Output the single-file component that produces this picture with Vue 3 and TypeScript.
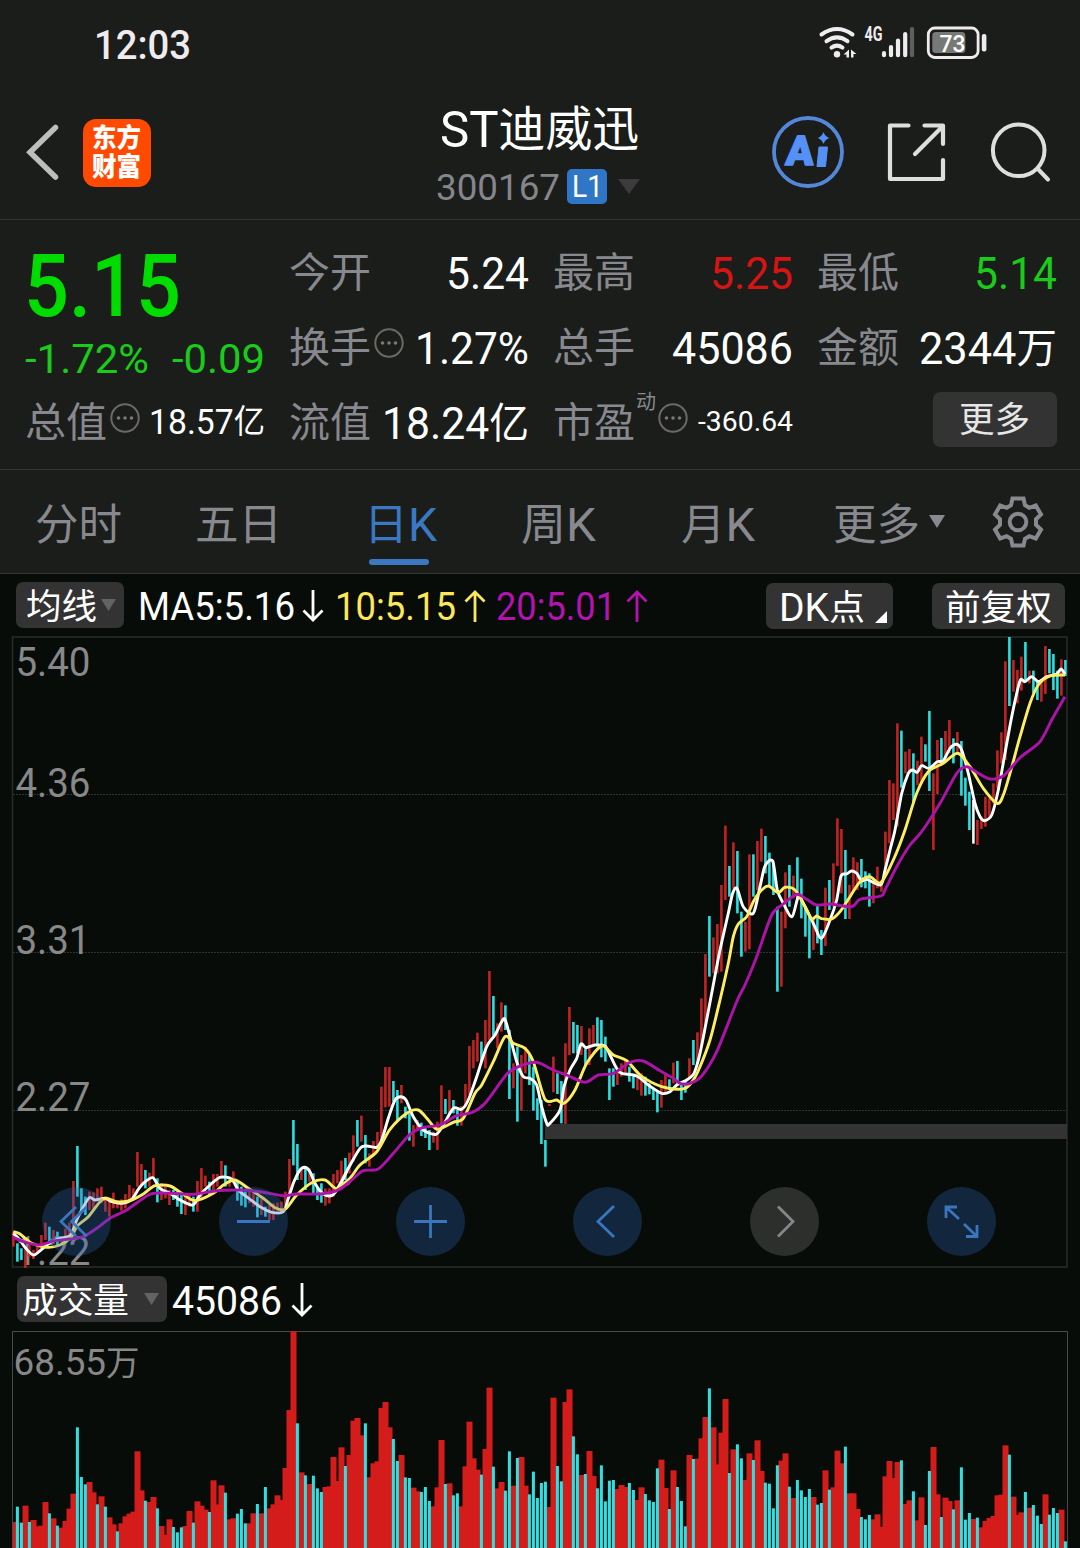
<script setup lang="ts">
import { h } from 'vue'

interface FitProps {
  t: string
  w: number
  s: number
  cjk?: number
  weight?: number
  color?: string
}

const CJK = /([\u4e00-\u9fff]+)/

/** One line of text fitted to a fixed width; its box is as tall as a capital letter. */
const Fit = (p: FitProps) => {
  const cap = p.s * 0.711
  const runs = p.t.split(CJK).filter((r) => r.length > 0)
  return h(
    'svg',
    { width: p.w, height: cap, overflow: 'visible', style: 'display:block;flex:none' },
    h(
      'text',
      {
        x: 0,
        y: cap,
        'font-size': p.s,
        'font-weight': p.weight ?? 400,
        fill: p.color ?? '#ffffff',
        'font-family': 'Roboto, "Noto Sans CJK SC", sans-serif',
        textLength: p.w,
        lengthAdjust: 'spacingAndGlyphs',
      },
      runs.map((r, i) =>
        CJK.test(r)
          ? h('tspan', { 'font-size': p.cjk ?? p.s * 0.92, dy: -1 }, r)
          : h('tspan', { dy: i > 0 ? 1 : 0 }, r),
      ),
    ),
  )
}
Fit.props = ['t', 'w', 's', 'cjk', 'weight', 'color']

const grey = '#88888f'
const green = '#1bcb1b'

/* Volume bars: R = rising, C = falling, followed by the top offset in thirds of a pixel. */
const volumeRaw = `R606 C560 C608 R557 C606 R600 R619 R617 R546 C580 R595 C617 R623 R603 R566 R521 C322 C471 C493 R486
R517 C553 R529 C560 R592 R613 C634 R610 R589 R581 R575 R394 R511 C542 R546 R531 C565 R618 R644 R598
C621 C637 C622 R618 R573 C608 R544 R557 R569 C576 R481 R553 R496 C518 R598 R595 C581 C567 C610 R610
R580 C552 R580 C501 R565 R553 R526 R540 R444 R270 R34 C310 R457 C466 R492 C467 C505 C516 R501 R499
R411 R483 R382 C438 R405 R302 R294 R346 C310 R472 R430 R424 R264 R246 R322 C357 C423 R405 C472 C474
R503 R514 C516 C501 C543 R559 R502 R360 C492 R490 C526 C520 R559 R439 R305 R415 R449 C464 R387 R203
C440 R505 R486 C512 C394 R497 C414 R411 R497 C523 C455 C534 C489 C485 R561 R233 C438 C484 R246 R208
C349 C403 R465 C462 R393 R468 C505 C436 C544 C482 C480 R507 R495 R501 C489 C510 R540 R502 C522 C541
C546 C445 R419 R504 C567 R451 C501 C543 C619 R405 C417 R416 R355 R291 C205 R322 R433 R338 R237 C459
R388 C373 C415 R480 R400 C420 R361 R453 C488 C491 C565 C436 R422 R400 C500 R534 C480 C511 C531 C507
R531 C554 C549 R451 C509 R502 R392 R430 C380 R520 R520 R567 C591 C598 C585 R598 R583 R620 R469 R423
R474 R426 C421 R552 R541 C514 R601 R532 C615 C453 R381 R523 C591 R533 R543 C568 R541 C442 C599 C579
R597 C593 R622 R603 R594 R588 R526 R524 R376 C404 R530 R584 R577 C516 R563 C555 C587 C612 R523 C584
C564 C579 R569 C664`

const centre = (i: number) => 13.4 + 4 * i

const volumes = volumeRaw.split(/\s+/).map((v, i) => ({
  up: v[0] === 'R',
  x: centre(i),
  y: 1320 + Number(v.slice(1)) / 3,
}))
const sortedVolumes = [...volumes.filter((v) => v.up), ...volumes.filter((v) => !v.up)]

/* Price ranges, grouped by the base line their offsets (thirds of a pixel) are counted from. */
const priceBlocks: { first: number; base: number; raw: string }[] = [
  {
    first: 0,
    base: 1040,
    raw: `575,620 610,665 625,660 628,684 615,650 630,657 612,642 585,625 548,600 560,605 570,612 575,615 590,612 566,606 548,603 423,560 318,470 445,510 470,525 455,510
457,510 445,480 440,490 470,515 480,530 458,505 480,505 478,512 462,505 435,480 445,475 336,440 372,435 390,445 398,440 354,412 415,487 430,480 440,475 450,495
450,480 455,500 465,522 470,525 465,500 470,515 423,515 384,475 407,440 425,465 402,450 402,440 363,410 376,440 410,440 394,430 420,482 440,497 455,502 450,490
460,500 470,532 475,525 500,530 495,540 490,540 488,518 485,515 455,495 357,470 240,376 312,420 385,420 378,450 385,425 400,465 440,480 430,488 445,497 445,490
402,470 390,430 362,420 354,420 338,400 286,365`,
  },
  {
    first: 86,
    base: 940,
    raw: `540,620 527,605 585,670 640,680 603,645 576,620 440,610 381,502 381,500 423,485 450,545 435,490 500,535 520,602 555,620 540,570 548,588 560,594 570,630 575,608
545,630 436,560 477,522 450,525 480,520 510,557 498,557 432,500 318,465 300,385 278,365 305,365 240,385 93,300 168,290 250,325 187,275 196,270 270,477 370,445
320,545 345,512 320,400 345,435 380,512 475,540 480,612 600,680 492,498 350,457 400,462 423,550 310,552 201,345 246,340 255,340 258,345 325,375 265,375 255,315
232,320 240,352 290,365 385,480 385,440 390,435 370,410 360,400 380,425 405,445 410,450 400,467 410,467 430,463 445,480 450,517 420,503 405,460 418,450 368,430
363,430`,
  },
  {
    first: 167,
    base: 800,
    raw: `850,900 840,878 775,835 720,795 697,790 595,740 462,670 348,530 412,520 372,520 255,515 77,300 198,290 127,265 153,340 335,470 365,455 163,448 163,290 123,270
86,185 108,220 158,260 195,285 320,575 335,560 217,385 195,320 227,295 172,300 236,355 320,410 350,475 350,450 315,430 390,465 263,438 240,330 190,320 55,198
87,280 150,357 255,357 172,275 187,270 177,262 214,265 220,320 240,310 200,265 240,275`,
  },
  {
    first: 218,
    base: 630,
    raw: `605,730 450,640 460,570 280,590 302,473 365,430 357,430 370,518 392,465 320,460 343,395 243,483 430,660 330,492 324,400 303,385 270,370 325,400 306,370 333,497
443,527 485,600 510,641 570,645 560,597 500,590 505,560 460,520 361,475 307,400 94,390 21,228 90,185 120,220 80,182 36,155 122,160 122,190 150,210 150,215
48,192 57,130 72,180 122,206 88,197 90,138`,
  },
]

const kindOverride: Record<number, string> = {
  2: 'C', 4: 'R', 21: 'R', 23: 'R', 26: 'R', 57: 'C', 58: 'C', 63: 'C', 70: 'C', 86: 'C', 240: 'W', 241: 'R', 257: 'R',
}

const candles = priceBlocks.flatMap((b) =>
  b.raw.split(/\s+/).map((pair, k) => {
    const i = b.first + k
    const [hi, lo] = pair.split(',').map(Number)
    const kind = kindOverride[i] ?? (volumes[i].up ? 'R' : 'C')
    return { i, kind, x: centre(i), y1: b.base + hi / 3, y2: b.base + lo / 3 }
  }),
)
const candleColor: Record<string, string> = { R: '#c22222', C: '#2adfe2', W: '#f4f4f4' }

type Segment = [number, number, string]

/* Joins segments into one smooth path; each segment has an origin and offsets in thirds. */
function smooth(segments: Segment[]): string {
  const pts = segments.flatMap(([ox, oy, raw]) =>
    raw.split(' ').map((p) => {
      const [x, y] = p.split(',').map(Number)
      return [ox + x / 3, oy + y / 3]
    }),
  )
  let d = `M${pts[0][0].toFixed(1)} ${pts[0][1].toFixed(1)}`
  for (let i = 0; i < pts.length - 1; i++) {
    const p0 = pts[Math.max(0, i - 1)]
    const p1 = pts[i]
    const p2 = pts[i + 1]
    const p3 = pts[Math.min(pts.length - 1, i + 2)]
    const c = [
      p1[0] + (p2[0] - p0[0]) / 7, p1[1] + (p2[1] - p0[1]) / 7,
      p2[0] - (p3[0] - p1[0]) / 7, p2[1] - (p3[1] - p1[1]) / 7,
      p2[0], p2[1],
    ]
    d += ` C${c.map((n) => n.toFixed(1)).join(' ')}`
  }
  return d
}

const ma5 = smooth([
  [0, 1040, '40,580 58,598 75,622 100,645 125,628 150,608 180,595 205,590 215,580 228,545 245,510 268,473 285,480 315,475 335,485 365,490 395,478 415,448 430,430 458,413 480,445 510,460 540,480 578,495 600,465 630,435 660,412 695,417 715,450 750,478 780,500 815,517 850,515 865,475 880,430 898,393 913,382 928,392 945,430 965,458 988,468 1005,458 1040,395'],
  [340, 940, '0,735 25,685 60,625 80,618 110,622 125,600 145,535 165,480 182,470 198,480 220,530 250,570 288,583 310,555 340,505 365,508 385,480 410,410 440,320 465,285 485,245 495,238 510,290 530,365 550,410 570,415 590,435 605,500 620,550 628,552 660,510 672,440 690,390 710,355 723,312 738,323 765,315 795,318 810,345 830,385 845,400 890,408 925,435 965,460 990,455 1010,435'],
  [680, 800, '20,840 42,820 60,760 78,670 95,580 120,450 145,340 158,280 171,265 190,320 220,340 240,260 255,198 278,183 292,270 310,310 336,350 355,290 370,310 400,370 424,415 450,360 470,300 483,228 500,222 515,213 530,220 545,243'],
  [860, 630, '20,748 62,765 75,720 90,660 105,600 125,490 145,430 158,420 172,427 185,407 207,415 232,395 250,392 270,355 290,343 305,360 325,430 345,520 360,560 373,572 395,555 415,480 435,370 455,260 475,170 483,148 495,155 515,140 535,155 560,140 590,132 603,117 615,133'],
])
const ma10 = smooth([
  [0, 1040, '40,575 60,582 95,610 140,622 180,615 215,590 230,560 265,530 300,485 320,475 350,485 390,482 430,462 465,437 510,438 545,460 585,482 640,460 670,435 705,420 745,445 790,475 825,503 855,508 890,465 935,428 975,420 1008,445 1045,430'],
  [340, 940, '0,740 30,715 60,675 110,635 150,568 200,520 235,510 265,540 292,568 340,547 370,535 405,460 425,435 460,365 495,290 520,310 555,325 580,365 615,478 650,480 672,490 705,450 740,370 785,318 820,345 860,362 900,405 945,432 985,445'],
  [680, 800, '15,865 40,840 60,800 90,720 120,600 145,490 160,410 175,372 200,350 220,305 240,275 265,258 295,278 315,262 345,270 375,320 395,357 410,348 425,356 455,357 480,335 510,290 540,245'],
  [860, 630, '30,740 62,758 100,690 135,600 170,490 205,425 250,400 293,370 330,410 370,475 412,520 430,495 450,430 480,320 510,220 535,165 570,138 615,135'],
])
const ma20 = smooth([
  [0, 1040, '40,592 70,605 115,615 160,603 210,597 250,590 290,565 330,535 380,510 450,463 510,460 580,463 650,452 720,450 780,455 850,467 890,462 960,462 1010,452 1050,425'],
  [340, 940, '0,748 35,720 70,692 115,687 160,640 210,583 250,562 300,555 350,527 395,518 435,490 500,403 540,378 590,367 640,390 680,405 735,427 775,405 820,400 870,367 910,363 960,392 1000,415'],
  [680, 800, '0,850 30,850 65,828 110,755 170,605 195,555 230,470 275,345 310,312 350,283 380,298 410,315 450,312 515,320 540,298 603,288'],
  [860, 630, '75,780 110,710 150,645 185,605 240,520 290,430 320,410 355,430 390,447 430,438 480,383 540,335 575,270 615,200'],
])

const axis = [
  { t: '5.40', y: 676 },
  { t: '4.36', y: 796.5 },
  { t: '3.31', y: 954 },
  { t: '2.27', y: 1111 },
  { t: '1.22', y: 1265 },
]

const controls = [
  { id: 'first', d: 'M34 20 L19 34.5 L34 49 M44.5 20 L29.500 34.5 L44.5 49' },
  { id: 'minus', d: 'M18 34.5 H51' },
  { id: 'plus', d: 'M18 34.5 H51 M34.5 18 V51' },
  { id: 'prev', d: 'M41 19 L25 34.5 L41 50' },
  { id: 'next', d: 'M28 19.500 L43 34.5 L28 49.500' },
  { id: 'expand', d: 'M19 31 V20 H30 M19 20 L32 32 M50 38 V49.500 H39 M50 49.500 L37 37' },
]
</script>

<template>
  <div class="screen">
    <div class="status">
      <Fit t="12:03" :w="97" :s="41" :weight="500" color="#efebef" />
      <svg class="status-icons" width="172" height="36" viewBox="817 25 172 36" overflow="visible" fill="none">
        <g stroke="#efebef" stroke-width="4" stroke-linecap="round">
          <path d="M821.500 34.500 Q837 23.500 852.500 34.500" />
          <path d="M826.500 41.200 Q837 33.500 847.500 41.200" />
          <path d="M831.500 47.600 Q837 43.600 842.500 47.600" />
        </g>
        <circle cx="837" cy="54.300" r="3.200" fill="#efebef" />
        <path d="M843.500 54.500 L849 49.500 V57.500 H846.500 V54.500 Z M851 49.500 L856.500 54 H853.500 V57.500 H851 Z" fill="#efebef" />
        <text x="864.500" y="40.600" font-size="19.500" font-weight="700" textLength="18" lengthAdjust="spacingAndGlyphs" fill="#efebef" font-family="Roboto, sans-serif">4G</text>
        <g stroke="#efebef" stroke-width="4.200" stroke-linecap="round">
          <path d="M884 53.200 V55.200 M891 47 V55.200 M898 40.500 V55.200 M905.200 34 V55.200" />
          <path d="M912 29 V55.200" stroke="#5d5f5d" />
        </g>
        <rect x="928.300" y="28" width="49.800" height="29.500" rx="6.500" stroke="#efebef" stroke-width="2.800" />
        <rect x="932.300" y="32" width="33" height="21" rx="3.500" fill="#777977" />
        <rect x="981.800" y="34" width="4.600" height="17.500" rx="2" fill="#efebef" />
        <text x="939.500" y="51.500" font-size="24.500" font-weight="500" textLength="26" lengthAdjust="spacingAndGlyphs" fill="#fff" font-family="Roboto, sans-serif">73</text>
      </svg>
    </div>

    <header class="head">
      <div class="head-left">
        <svg width="34" height="58" viewBox="0 0 34 58" fill="none" stroke="#bdbdbd" stroke-width="5.500" stroke-linecap="round" stroke-linejoin="miter">
          <path d="M29.500 4.500 L4 29.300 L29.500 54" />
        </svg>
        <div class="logo">
          <Fit t="东方" :w="49" :s="27" :cjk="26" :weight="900" />
          <Fit t="财富" :w="49" :s="27" :cjk="26" :weight="900" />
        </div>
      </div>
      <div class="title">
        <Fit t="ST迪威迅" :w="199" :s="50.500" :cjk="48" />
        <div class="code">
          <Fit t="300167" :w="124" :s="37.500" color="#85858c" />
          <span class="badge"><Fit t="L1" :w="31" :s="31" /></span>
          <svg width="22" height="15" viewBox="0 0 22 15"><path d="M0 0 H22 L11 15 Z" fill="#3b3c3b" /></svg>
        </div>
      </div>
      <div class="head-right">
        <svg width="74" height="74" viewBox="771.500 115.500 74 74">
          <circle cx="808.500" cy="152.500" r="34" fill="none" stroke="#5486da" stroke-width="3.800" />
          <text transform="translate(785.500 165) skewX(-4)" font-size="41" font-weight="900" textLength="28" lengthAdjust="spacingAndGlyphs" fill="#5490f5" stroke="#5490f5" stroke-width="1.600" stroke-linejoin="round" font-family="Roboto, sans-serif">A</text>
          <path d="M819.500 147.500 H828 L826 167 H817.500 Z" fill="#5490f5" stroke="#5490f5" stroke-width="1" stroke-linejoin="round" />
          <path d="M824 132.500 Q825.500 137 829.800 138.500 Q825.500 140 824 144.500 Q822.500 140 818.200 138.500 Q822.500 137 824 132.500 Z" fill="#5490f5" />
        </svg>
        <svg width="62" height="62" viewBox="886 121.500 62 62" fill="none" stroke="#dedede" stroke-width="4.200" stroke-linecap="round" stroke-linejoin="round">
          <path d="M908.500 126 H890 V179.500 H943 V160.500 M924.500 126 H943 V144.500 M915 154.500 L942 127.500" />
        </svg>
        <svg width="62" height="62" viewBox="989 120.500 62 62" fill="none" stroke="#dedede" stroke-width="4" stroke-linecap="round">
          <circle cx="1018.700" cy="149.800" r="25.800" />
          <path d="M1037.500 168 L1048 179" />
        </svg>
      </div>
    </header>

    <section class="quote">
      <div class="col first">
        <Fit class="price" t="5.15" :w="157" :s="88" :weight="500" color="#00dc00" />
        <div class="cell change">
          <Fit t="-1.72%" :w="124" :s="41" :color="green" />
          <Fit t="-0.09" :w="93" :s="41" :color="green" />
        </div>
        <div class="cell">
          <div class="label">
            <Fit t="总值" :w="82" :s="44" :cjk="41" :color="grey" />
            <svg class="dots" width="30" height="30" viewBox="0 0 30 30"><circle cx="15" cy="15" r="13.700" fill="none" stroke="#6b6965" stroke-width="2" /><g fill="#7b7975"><circle cx="8.500" cy="15" r="1.800" /><circle cx="15" cy="15" r="1.800" /><circle cx="21.500" cy="15" r="1.800" /></g></svg>
          </div>
          <Fit class="lift4" t="18.57亿" :w="116" :s="35" :cjk="32.500" />
        </div>
      </div>
      <div class="col">
        <div class="cell"><Fit t="今开" :w="82" :s="44" :cjk="41" :color="grey" /><Fit t="5.24" :w="83" :s="45" /></div>
        <div class="cell">
          <div class="label">
            <Fit t="换手" :w="82" :s="44" :cjk="41" :color="grey" />
            <svg class="dots" width="30" height="30" viewBox="0 0 30 30"><circle cx="15" cy="15" r="13.700" fill="none" stroke="#6b6965" stroke-width="2" /><g fill="#7b7975"><circle cx="8.500" cy="15" r="1.800" /><circle cx="15" cy="15" r="1.800" /><circle cx="21.500" cy="15" r="1.800" /></g></svg>
          </div>
          <Fit t="1.27%" :w="114" :s="45" />
        </div>
        <div class="cell"><Fit t="流值" :w="82" :s="44" :cjk="41" :color="grey" /><Fit t="18.24亿" :w="147" :s="45" :cjk="42" /></div>
      </div>
      <div class="col">
        <div class="cell"><Fit t="最高" :w="82" :s="44" :cjk="41" :color="grey" /><Fit t="5.25" :w="83" :s="45" color="#d51414" /></div>
        <div class="cell"><Fit t="总手" :w="82" :s="44" :cjk="41" :color="grey" /><Fit t="45086" :w="121" :s="45" /></div>
        <div class="cell">
          <div class="label">
            <Fit t="市盈" :w="82" :s="44" :cjk="41" :color="grey" />
            <Fit class="sup" t="动" :w="20" :s="20" :cjk="20" :color="grey" />
            <svg class="dots" width="30" height="30" viewBox="0 0 30 30"><circle cx="15" cy="15" r="13.700" fill="none" stroke="#6b6965" stroke-width="2" /><g fill="#7b7975"><circle cx="8.500" cy="15" r="1.800" /><circle cx="15" cy="15" r="1.800" /><circle cx="21.500" cy="15" r="1.800" /></g></svg>
          </div>
          <Fit class="lift6" t="-360.64" :w="95" :s="27" />
        </div>
      </div>
      <div class="col">
        <div class="cell"><Fit t="最低" :w="82" :s="44" :cjk="41" :color="grey" /><Fit t="5.14" :w="83" :s="45" :color="green" /></div>
        <div class="cell"><Fit t="金额" :w="82" :s="44" :cjk="41" :color="grey" /><Fit t="2344万" :w="138" :s="45" :cjk="42" /></div>
        <div class="cell end"><button class="more"><Fit t="更多" :w="71" :s="38" :cjk="35.500" color="#e6e6e6" /></button></div>
      </div>
    </section>

    <nav class="tabs">
      <Fit t="分时" :w="87" :s="46" :cjk="43.500" :color="grey" />
      <Fit t="五日" :w="87" :s="46" :cjk="43.500" :color="grey" />
      <div class="tab-active"><Fit t="日K" :w="73" :s="46" :cjk="43.500" color="#3a78c2" /><i /></div>
      <Fit t="周K" :w="75" :s="46" :cjk="43.500" :color="grey" />
      <Fit t="月K" :w="74" :s="46" :cjk="43.500" :color="grey" />
      <div class="tab-more">
        <Fit t="更多" :w="87" :s="46" :cjk="43.500" :color="grey" />
        <svg width="16" height="13" viewBox="0 0 16 13"><path d="M0 0 H16 L8 13 Z" fill="#88888f" /></svg>
      </div>
      <svg class="gear" width="54" height="54" viewBox="-27 -27 54 54" fill="none" stroke="#88888f" stroke-width="4">
        <path d="M-5.500 -23.500 H5.500 L7 -16.800 L11.300 -14.200 L17.800 -16.500 L23 -7.500 L18 -2.800 V2.800 L23 7.500 L17.800 16.500 L11.300 14.200 L7 16.800 L5.500 23.500 H-5.500 L-7 16.800 L-11.300 14.200 L-17.800 16.500 L-23 7.500 L-18 2.800 V-2.800 L-23 -7.500 L-17.800 -16.500 L-11.300 -14.200 L-7 -16.800 Z" />
        <circle r="8.300" />
      </svg>
    </nav>

    <div class="toolbar">
      <button class="chip avg">
        <Fit t="均线" :w="71" :s="38" :cjk="35.500" />
        <svg width="15" height="12" viewBox="0 0 15 12"><path d="M0 0 H15 L7.500 12 Z" fill="#626462" /></svg>
      </button>
      <div class="ma five">
        <Fit t="MA5:5.16" :w="157" :s="38.500" />
        <svg width="22" height="32" viewBox="0 0 22 32" fill="none" stroke="#fff" stroke-width="2.800"><path d="M11 0 V30 M1.500 20.500 L11 30 L20.500 20.500" /></svg>
      </div>
      <div class="ma ten">
        <Fit t="10:5.15" :w="121" :s="38.500" color="#fde75a" />
        <svg width="22" height="32" viewBox="0 0 22 32" fill="none" stroke="#fde75a" stroke-width="2.800"><path d="M11 32 V2 M1.500 11.500 L11 2 L20.500 11.500" /></svg>
      </div>
      <div class="ma twenty">
        <Fit t="20:5.01" :w="120" :s="38.500" color="#b413b0" />
        <svg width="22" height="32" viewBox="0 0 22 32" fill="none" stroke="#b413b0" stroke-width="2.800"><path d="M11 32 V2 M1.500 11.500 L11 2 L20.500 11.500" /></svg>
      </div>
      <button class="chip dk">
        <Fit t="DK点" :w="86" :s="38.500" :cjk="35.500" />
        <svg width="12" height="12" viewBox="0 0 12 12"><path d="M12 0 V12 H0 Z" fill="#fff" /></svg>
      </button>
      <button class="chip adj"><Fit t="前复权" :w="107" :s="38" :cjk="35.500" /></button>
    </div>

    <div class="chart">
      <svg width="1080" height="632" viewBox="0 636 1080 632" overflow="visible" fill="none">
        <g stroke="#2f3230" stroke-width="1" stroke-dasharray="2 1">
          <path d="M13 794.500 H1067 M13 952.500 H1067 M13 1110.500 H1067" />
        </g>
        <rect x="12.500" y="637" width="1054.500" height="630" stroke="#2b2b2b" stroke-width="1.500" />
        <g fill="#888888" font-size="40" font-family="Roboto, sans-serif">
          <text v-for="a in axis" :key="a.t" x="15.500" :y="a.y" textLength="75" lengthAdjust="spacingAndGlyphs">{{ a.t }}</text>
        </g>
        <rect x="545" y="1124" width="522" height="15" fill="#333333" />
        <line v-for="c in candles" :key="c.i" :x1="c.x" :x2="c.x" :y1="c.y1" :y2="c.y2" :stroke="candleColor[c.kind]" stroke-width="2.600" />
        <g stroke-width="2.900" stroke-linejoin="round">
          <path :d="ma5" stroke="#ffffff" />
          <path :d="ma10" stroke="#ffee63" />
          <path :d="ma20" stroke="#ad13a8" />
        </g>
      </svg>
      <div class="controls">
        <svg v-for="c in controls" :key="c.id" :class="['ctl', c.id]" width="69" height="69" viewBox="0 0 69 69" fill="none" stroke-width="2.800">
          <path :d="c.d" />
        </svg>
      </div>
    </div>

    <div class="vol-head">
      <button class="chip vol">
        <Fit t="成交量" :w="107" :s="38" :cjk="35.500" />
        <svg width="15" height="12" viewBox="0 0 15 12"><path d="M0 0 H15 L7.500 12 Z" fill="#626462" /></svg>
      </button>
      <Fit class="vol-num" t="45086" :w="110" :s="40.500" />
      <svg class="vol-arrow" width="22" height="34" viewBox="0 0 22 34" fill="none" stroke="#fff" stroke-width="2.800"><path d="M11 0 V32 M1.500 22.500 L11 32 L20.500 22.500" /></svg>
    </div>

    <svg class="volume" width="1080" height="218" viewBox="0 1330 1080 218" fill="none">
      <path d="M12.500 1548 V1331.500 H1067.500 V1548" stroke="#4a4a4a" />
      <text x="13.500" y="1375" font-size="37.500" textLength="126" lengthAdjust="spacingAndGlyphs" fill="#888" font-family="Roboto, 'Noto Sans CJK SC', sans-serif">68.55<tspan font-size="34">万</tspan></text>
      <rect v-for="(v, i) in sortedVolumes" :key="i" :x="v.up ? Math.max(13, v.x - 2.900) : v.x - 1.500" :y="v.y" :width="v.up ? 6 : 3" :height="1548 - v.y" :fill="v.up ? '#d41c1a' : '#2fe0e2'" />
    </svg>
  </div>
</template>

<style>
body {
  margin: 0;
  background: #070c08;
}
</style>

<style scoped>
.screen {
  width: 1080px;
  height: 1548px;
  overflow: hidden;
  background: #070c08;
  font-family: Roboto, 'Noto Sans CJK SC', sans-serif;
  color: #fff;
}
svg {
  display: block;
  flex: none;
}
button {
  border: 0;
  padding: 0;
  background: #333333;
  border-radius: 7px;
  box-sizing: border-box;
}
.status {
  height: 90px;
  box-sizing: border-box;
  padding: 25px 91px 0 94px;
  display: flex;
  justify-content: space-between;
  align-items: flex-start;
  background: #1a1d1a;
}
.status > :first-child {
  margin-top: 5px;
}
.head {
  height: 130px;
  box-sizing: border-box;
  border-bottom: 1px solid #353535;
  background: #1a1d1a;
  display: grid;
  grid-template-columns: 436px 260px 384px;
}
.head-left {
  display: flex;
  align-items: flex-start;
  padding: 33px 0 0 26px;
}
.logo {
  width: 68px;
  height: 68px;
  margin: -4.500px 0 0 23px;
  border-radius: 13px;
  background: #ff4a00;
  box-sizing: border-box;
  padding: 10.500px 0 0 9px;
  display: flex;
  flex-direction: column;
  gap: 9.500px;
}
.title > svg {
  margin: 20.500px 0 0 4px;
}
.code {
  display: flex;
  align-items: center;
  margin-top: 22px;
  height: 36px;
}
.badge {
  width: 40px;
  height: 35px;
  margin: 0 11px 0 7px;
  border-radius: 5px;
  background: #2f77c6;
  display: flex;
  align-items: center;
  justify-content: center;
}
.head-right {
  display: flex;
  align-items: center;
  height: 124px;
  padding-left: 75px;
  gap: 41px;
}
.quote {
  height: 250px;
  box-sizing: border-box;
  border-bottom: 1px solid #353535;
  background: #1a1d1a;
  padding: 0 23.500px 0 24.500px;
  display: grid;
  grid-template-columns: repeat(4, 240px);
  justify-content: space-between;
}
.col {
  padding-top: 32px;
  display: flex;
  flex-direction: column;
  gap: 38.500px;
}
.cell {
  height: 36.500px;
  display: flex;
  justify-content: space-between;
  align-items: flex-end;
}
.first {
  gap: 0;
}
.price {
  margin-top: 1px;
  margin-left: -0.500px;
}
.first .cell.change {
  height: 29px;
  margin: 28.500px 0 29px;
}
.label {
  display: flex;
  align-items: flex-end;
}
.dots {
  margin: 0 0 6px 3px;
}
.sup {
  margin: 0 0 28px 1px;
}
.sup + .dots {
  margin-left: 2px;
}
.lift4 {
  margin-bottom: 4.500px;
}
.lift6 {
  margin-bottom: 7.500px;
}
.end {
  justify-content: flex-end;
}
.more {
  width: 124px;
  height: 55px;
  margin: 0 0 -8px;
  display: flex;
  justify-content: center;
  align-items: center;
}
.more > svg {
  margin-top: 2px;
}
.tabs {
  height: 104px;
  box-sizing: border-box;
  border-bottom: 1px solid #353735;
  background: #1a1d1a;
  padding-left: 35px;
  display: grid;
  grid-template-columns: 159.500px 169.500px 157px 160px 152px 158px auto;
  align-items: start;
}
.tabs > * {
  margin-top: 37.500px;
}
.tab-active i {
  display: block;
  width: 60px;
  height: 6px;
  margin: 18.500px 0 0 5px;
  border-radius: 3px;
  background: #3a78c2;
}
.tab-more {
  display: flex;
  gap: 8.500px;
}
.tab-more > svg:last-child {
  margin-top: 7.500px;
}
.tabs > .gear {
  margin-top: 24.500px;
}
.toolbar {
  height: 62px;
  padding: 8px 15.500px 0 16px;
  box-sizing: border-box;
  display: flex;
  align-items: flex-start;
}
.chip {
  height: 46px;
  display: flex;
  align-items: center;
}
.chip > svg:first-child {
  margin-top: 4px;
}
.avg {
  width: 108px;
  padding-left: 9.500px;
  gap: 4px;
}
.ma {
  display: flex;
  align-items: center;
  height: 48px;
}
.ma > svg:first-child {
  margin-top: 1px;
}
.five {
  margin-left: 13.500px;
  gap: 7.500px;
}
.ten {
  margin-left: 10.500px;
  gap: 8px;
}
.twenty {
  margin-left: 10px;
  gap: 10px;
}
.dk {
  width: 127px;
  margin: 0.500px 0 0 auto;
  padding-left: 13px;
  gap: 10px;
}
.dk svg:last-child {
  margin-top: 22px;
}
.adj {
  width: 133px;
  margin: 0.500px 0 0 39px;
  justify-content: center;
}
.chart {
  position: relative;
  height: 632px;
}
.controls {
  position: absolute;
  left: 42px;
  right: 84px;
  top: 551px;
  display: flex;
  justify-content: space-between;
}
.ctl {
  border-radius: 50%;
  background: rgba(46, 101, 180, 0.31);
  stroke: #3a76bd;
}
.next {
  background: rgba(150, 150, 150, 0.26);
  stroke: #85858a;
}
.vol-head {
  height: 62px;
  display: flex;
  align-items: flex-start;
  padding: 8px 0 0 16.500px;
  box-sizing: border-box;
}
.vol {
  width: 150px;
  padding-left: 5px;
  gap: 15px;
}
.vol-num {
  margin: 9.500px 0 0 5.500px;
}
.vol-arrow {
  margin: 6.500px 0 0 9px;
}
</style>
